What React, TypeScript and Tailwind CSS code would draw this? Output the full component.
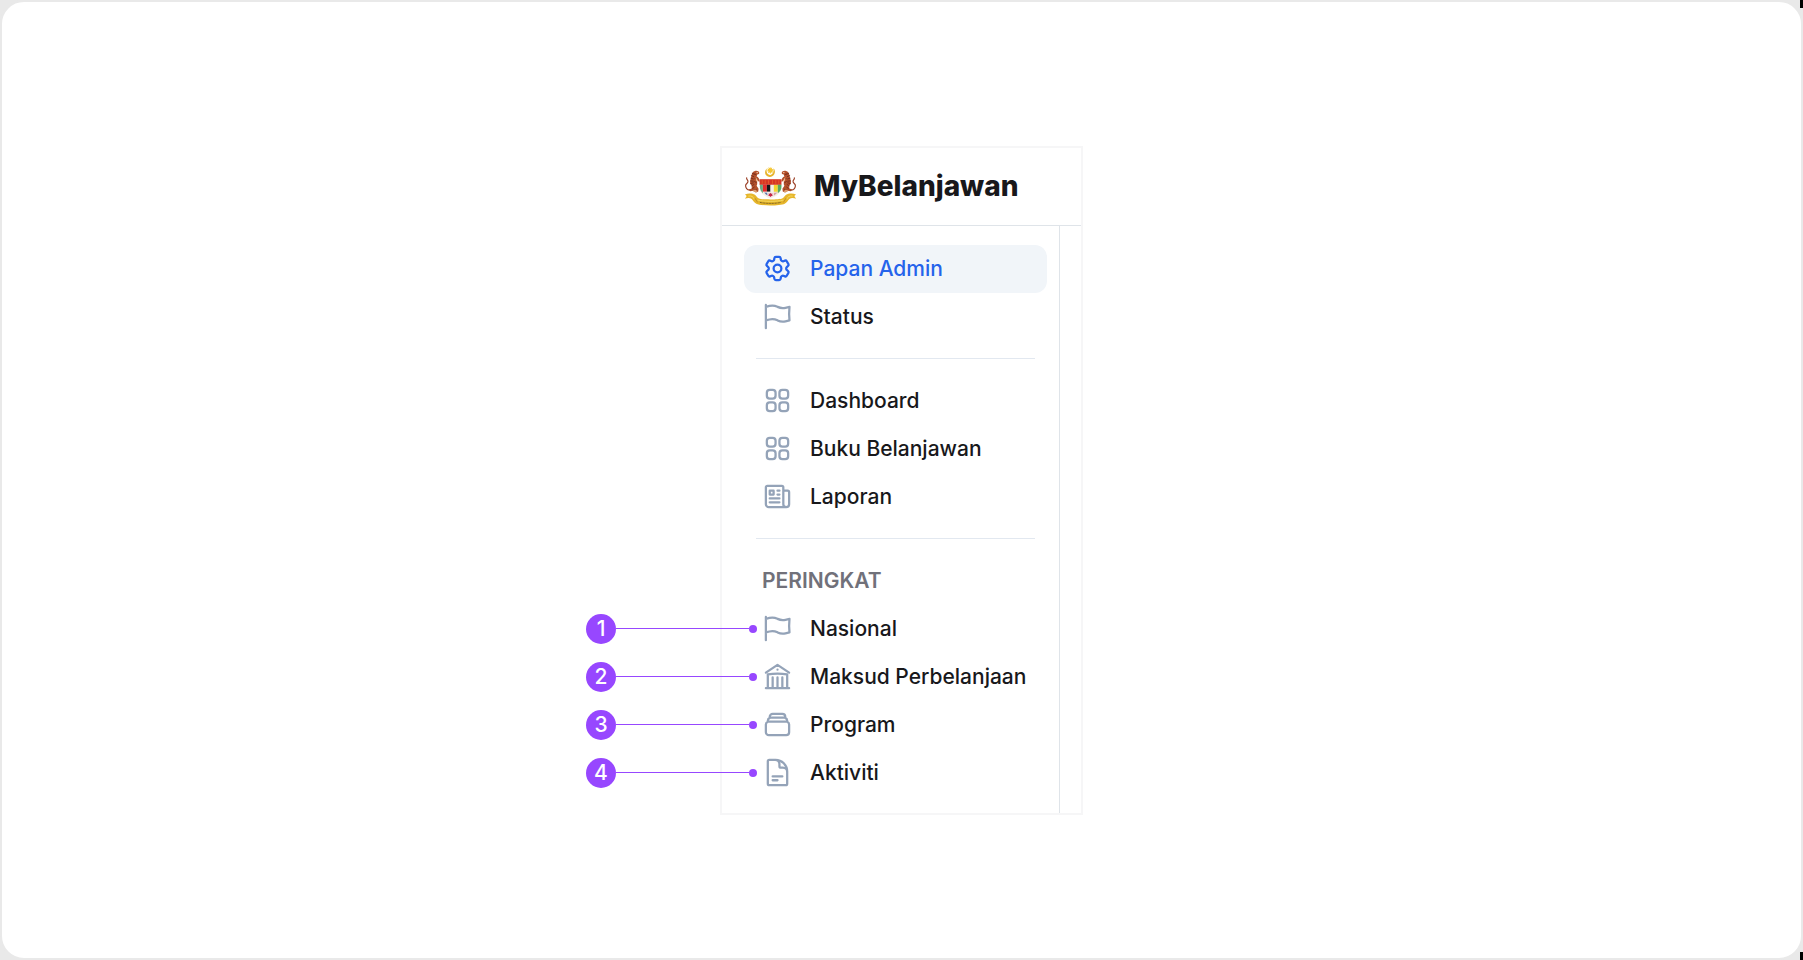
import type { ReactNode } from "react";
import type { IconType } from "react-icons";
import {
  HiOutlineBuildingLibrary,
  HiOutlineCog6Tooth,
  HiOutlineDocumentText,
  HiOutlineFlag,
  HiOutlineNewspaper,
  HiOutlineRectangleStack,
  HiOutlineSquares2X2,
} from "react-icons/hi2";

type NavItemProps = {
  icon: IconType;
  label: string;
  active?: boolean;
  marker?: number;
};

/** Numbered callout whose leader line ends at the item's icon. */
function Callout({ value }: { value: number }) {
  return (
    <span className="absolute top-0 right-full -mr-[13px] flex h-12 w-[171px] items-center">
      <span className="flex size-[30px] shrink-0 items-center justify-center rounded-full bg-[#9747ff] text-[21px] leading-none font-medium text-white">
        {value}
      </span>
      <span className="h-px flex-1 bg-[#9747ff]" />
      <span className="size-2 shrink-0 rounded-full bg-[#9747ff]" />
    </span>
  );
}

function NavItem({ icon: Icon, label, active = false, marker }: NavItemProps) {
  return (
    <li className="relative">
      {marker !== undefined && <Callout value={marker} />}
      <a
        href="#"
        aria-current={active ? "page" : undefined}
        className={
          active
            ? "flex h-12 items-center gap-[17px] rounded-xl bg-[#f1f5f9] pl-[18px] text-[21px] font-medium text-[#2563eb]"
            : "flex h-12 items-center gap-[17px] rounded-xl pl-[18px] text-[21px] font-medium text-[#18181b]"
        }
      >
        <Icon
          className={
            active
              ? "size-[31px] shrink-0 stroke-[1.75] text-[#2563eb]"
              : "size-[31px] shrink-0 stroke-[1.75] text-[#94a3b8]"
          }
          aria-hidden="true"
        />
        <span className="whitespace-nowrap">{label}</span>
      </a>
    </li>
  );
}

function NavGroup({ children }: { children: ReactNode }) {
  return <ul className="flex flex-col">{children}</ul>;
}

function Divider() {
  return (
    <div className="flex h-9 items-center px-3">
      <hr className="w-full border-t border-[#e2e8f0]" />
    </div>
  );
}

function Tiger() {
  return (
    <g>
      <path
        d="M121 92c5-2 12 0 13 5 1 4-2 6-6 6l-2 6c5 2 8 6 9 11l4 1-1 4-6-1-5-5c1 7 2 13-1 18l6 9-1 8-7 3-8-5-9 1-4-5 8-3 1-8c-5-4-7-10-5-17l4-16c1-6 4-10 10-12Z"
        fill="#b3502b"
      />
      <path
        d="M106 150c-9-1-14-7-13-15 1-5 8-6 7-12-1-5-5-5-4-10"
        fill="none"
        stroke="#9a3e24"
        strokeWidth="3.5"
        strokeLinecap="round"
      />
      <path
        d="m113 99 6 3m-9 4 7 3m-8 5 7 2m-8 6 8 1m-8 7 8-2m-5 9 7-4m2-32 4 2m-3 12 6 2m-7 7 5 3m-6 23 6-2m-11-3 5-4"
        fill="none"
        stroke="#5d2018"
        strokeWidth="2"
        strokeLinecap="round"
      />
      <path d="m123 111 5 5 1 9-5-3Z" fill="#edb283" />
      <path d="m115 151 7-3 6 5-3 4-8-2Z" fill="#dca06f" />
      <path d="M125 95h4l2 3-4 1Z" fill="#f1c69f" />
    </g>
  );
}

function Crest() {
  return (
    <svg
      viewBox="88 78 160 122"
      className="h-[41px] w-[53px] shrink-0"
      role="img"
      aria-label="Jata Negara"
    >
      <Tiger />
      <g transform="translate(336 0) scale(-1 1)">
        <Tiger />
      </g>
      <path
        d="M157 85c-8 7-7 20 3 24 7 3 15 0 19-6 4-7 3-14-2-19 2 10-1 18-9 20-9 1-14-8-11-19Z"
        fill="#e7b32b"
      />
      <path
        d="m167 79 2 6 4-4-1 6 6-1-4 4 5 3-6 1 2 5-5-3-3 5-2-5-5 3 2-6-6 0 5-4-4-4 6 1-1-6 4 4Z"
        fill="#f5c62f"
      />
      <path d="M135 117h66v24c0 17-13 27-33 34-20-7-33-17-33-34Z" fill="#f7f1e6" />
      <path d="M135 117h66v17h-66Z" fill="#d73526" />
      <path
        d="M143 120v11m9-11v11m10-11v11m12-11v11m10-11v11m9-11v11"
        stroke="#e8742f"
        strokeWidth="1.8"
      />
      <path d="M136 134h9v25c-6-5-9-11-9-19Z" fill="#69a982" />
      <path d="M145 134h12v21h-12Z" fill="#e22b2c" />
      <path d="M157 134h11v21h-11Z" fill="#171719" />
      <path d="M168 134h10v21h-10Z" fill="#f4f1e8" />
      <path d="M178 134h12v23h-12Z" fill="#f4d72e" />
      <path d="M190 134h11v6c0 8-3 14-11 19Z" fill="#57a963" />
      <path d="M145 155h45c-5 9-12 15-22 18-10-3-17-9-23-18Z" fill="#f4ece8" />
      <path d="m149 157 9 1 1 8c-4-2-7-5-10-9Z" fill="#5c76ab" />
      <path d="m188 157-10 1v9c4-3 8-6 10-10Z" fill="#d8a0a0" />
      <path
        d="m168 158 2 3 4-1-1 4 2 3-4 1-3 3-3-3-4-1 2-3-1-4 4 1Z"
        fill="#c62644"
      />
      <path
        d="M91 163c9-4 22-4 30 1 5 4 6 9 12 11 9 4 61 4 70 0 6-2 7-7 12-11 8-5 21-5 30-1l-5 5 5 8c-8-3-15-3-20 1-4 4-6 10-14 14-15 7-71 7-86 0-8-4-10-10-14-14-5-4-12-4-20-1l5-8Z"
        fill="#e6b62b"
      />
      <path
        d="M129 180c19 5 59 5 78 0M101 168c10-2 15 2 18 9m116-9c-10-2-15 2-18 9"
        fill="none"
        stroke="#f7df6b"
        strokeWidth="2.5"
      />
      <path
        d="M136 187c20 4 44 4 64 0"
        fill="none"
        stroke="#725a24"
        strokeWidth="3"
        strokeDasharray="3 1.5"
      />
      <path
        d="m121 174 8 13m86-13-8 13"
        fill="none"
        stroke="#ad7821"
        strokeWidth="1.8"
      />
    </svg>
  );
}

export default function App() {
  return (
    <div className="relative min-h-screen bg-[#e9e9e9] font-['Inter',sans-serif]">
      <span className="absolute top-0 right-0 h-2 w-[3px] bg-black" />
      <span className="absolute right-0 bottom-0 h-2 w-[3px] bg-black" />
      <main className="relative flex min-h-screen items-center justify-center rounded-3xl border-2 border-[#e9e9e9] bg-white">
        <section className="w-[363px] border-2 border-[#f6f6f7] bg-white">
          <header className="flex h-[78px] items-center gap-[17px] border-b border-[#dfe4e9] pl-[22px]">
            <Crest />
            <h1 className="text-[28px] font-extrabold text-[#18181b]">
              MyBelanjawan
            </h1>
          </header>
          <nav
            aria-label="Menu utama"
            className="mr-[21px] border-r border-[#dfe4e9] pt-[19px] pr-3 pb-4 pl-[22px]"
          >
            <NavGroup>
              <NavItem icon={HiOutlineCog6Tooth} label="Papan Admin" active />
              <NavItem icon={HiOutlineFlag} label="Status" />
            </NavGroup>
            <Divider />
            <NavGroup>
              <NavItem icon={HiOutlineSquares2X2} label="Dashboard" />
              <NavItem icon={HiOutlineSquares2X2} label="Buku Belanjawan" />
              <NavItem icon={HiOutlineNewspaper} label="Laporan" />
            </NavGroup>
            <Divider />
            <h2 className="flex h-12 items-center pl-[18px] text-[21px] font-semibold text-[#71717a]">
              PERINGKAT
            </h2>
            <NavGroup>
              <NavItem icon={HiOutlineFlag} label="Nasional" marker={1} />
              <NavItem
                icon={HiOutlineBuildingLibrary}
                label="Maksud Perbelanjaan"
                marker={2}
              />
              <NavItem icon={HiOutlineRectangleStack} label="Program" marker={3} />
              <NavItem icon={HiOutlineDocumentText} label="Aktiviti" marker={4} />
            </NavGroup>
          </nav>
        </section>
      </main>
    </div>
  );
}
